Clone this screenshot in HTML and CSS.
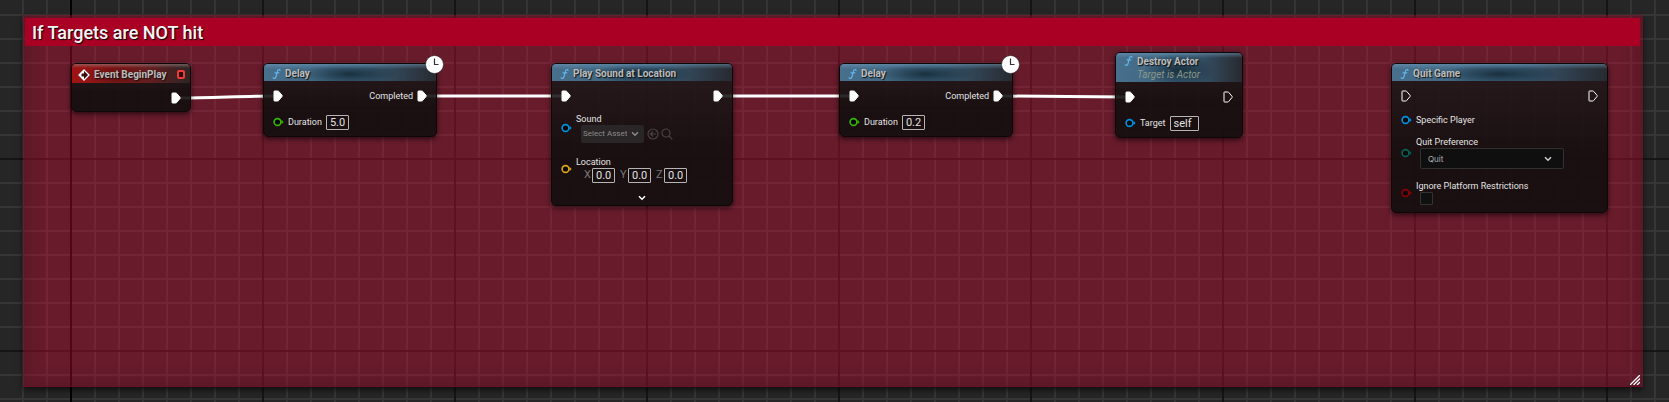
FILE: index.html
```html
<!DOCTYPE html>
<html lang="en">
<head>
<meta charset="utf-8">
<title>Event Graph</title>
<link rel="stylesheet" href="styles.css">
</head>
<body>
<svg class="defs" width="0" height="0" aria-hidden="true">
  <symbol id="exec" viewBox="0 0 10 12"><path d="M1.5 1h3.2q.6 0 1 .4L9 5.3q.5.6 0 1.2L5.7 10.5q-.4.5-1 .5H1.5q-.5 0-.5-.5v-9q0-.5.5-.5z" stroke="#fff" stroke-width="1"/></symbol>
  <symbol id="pin" viewBox="0 0 11 10"><circle cx="4.5" cy="5" r="3.4" fill="#080808" stroke="currentColor" stroke-width="1.6"/><path d="M8.5 2.8 10.6 5 8.5 7.2z" fill="currentColor"/></symbol>
  <symbol id="func" viewBox="0 0 10 12"><path d="M9 1.9Q8.6 1 7.5 1.2 6.2 1.4 5.7 3.6L4.6 8.5Q4.1 10.8 2.6 10.9 1.5 11 1.2 10.2M3.3 4.7H7.6" fill="none" stroke="#62b5ea" stroke-width="1.3" stroke-linecap="round"/></symbol>
  <symbol id="chev" viewBox="0 0 8 6"><path d="M1 1.3 4 4.3 7 1.3" fill="none" stroke="currentColor" stroke-width="1.5"/></symbol>
  <symbol id="clock" viewBox="0 0 19 19"><circle cx="9.5" cy="9.5" r="9" fill="#fff" stroke="#222" stroke-width=".6"/><path d="M9.5 3.5V9.5H13.5" fill="none" stroke="#333" stroke-width="1.2"/></symbol>
</svg>
<main class="graph">
  <section class="comment">
    <h1 class="comment-title">If Targets are NOT hit</h1>
    <svg class="grip" viewBox="0 0 10 10" aria-hidden="true"><path d="M0 10 10 0M3.5 10 10 3.5M7 10 10 7" stroke="#fff" stroke-width="1.3"/></svg>
  </section>
  <svg class="wires" aria-hidden="true">
    <path d="M180 98C210 98 245 96 275 96M425 96H563M722 96H851M1001 96C1040 96 1087 97 1127 97"/>
  </svg>

  <article class="node event">
    <header class="head red">
      <svg class="diamond" viewBox="0 0 12 12" aria-hidden="true"><path d="M6 1 11 6 6 11 1 6z" fill="#3a0c0c" stroke="#fff" stroke-width="1.3"/><path d="M1 6 6 1V4.5H3.5V7.5H6V11z" fill="#fff"/></svg>
      <h2>Event BeginPlay</h2>
      <span class="delegate"></span>
    </header>
    <div class="body"><div class="row end"><svg class="exec on"><use href="#exec"/></svg></div></div>
  </article>

  <article class="node delay first">
    <header class="head"><svg class="func"><use href="#func"/></svg><h2>Delay</h2></header>
    <svg class="clock"><use href="#clock"/></svg>
    <div class="body">
      <div class="row"><svg class="exec on"><use href="#exec"/></svg><span class="out">Completed</span><svg class="exec on"><use href="#exec"/></svg></div>
      <div class="row"><svg class="pin green"><use href="#pin"/></svg><label for="d1">Duration</label><input class="field" id="d1" value="5.0"></div>
    </div>
  </article>

  <article class="node sound">
    <header class="head"><svg class="func"><use href="#func"/></svg><h2>Play Sound at Location</h2></header>
    <div class="body">
      <div class="row ends"><svg class="exec on"><use href="#exec"/></svg><svg class="exec on"><use href="#exec"/></svg></div>
      <div class="row tall">
        <svg class="pin blue"><use href="#pin"/></svg>
        <div class="stack">
          <label for="asset">Sound</label>
          <div class="asset">
            <span class="pick dim"><select id="asset"><option>Select Asset</option></select><svg class="chev"><use href="#chev"/></svg></span>
            <button class="tool" aria-label="Use selected asset"><svg viewBox="0 0 12 12"><circle cx="6" cy="6" r="5"/><path d="M9 6H3.5M6 3.5 3.5 6 6 8.5"/></svg></button>
            <button class="tool" aria-label="Browse to asset"><svg viewBox="0 0 12 12"><circle cx="5" cy="5" r="4"/><path d="M8 8 11.3 11.3"/></svg></button>
          </div>
        </div>
      </div>
      <div class="row tall loc">
        <svg class="pin yellow"><use href="#pin"/></svg>
        <div class="stack">
          <span class="label">Location</span>
          <div class="vector">
            <label for="x">X</label><input class="field" id="x" value="0.0">
            <label for="y">Y</label><input class="field" id="y" value="0.0">
            <label for="z">Z</label><input class="field" id="z" value="0.0">
          </div>
        </div>
      </div>
      <button class="more" aria-label="Show more"><svg class="chev"><use href="#chev"/></svg></button>
    </div>
  </article>

  <article class="node delay second">
    <header class="head"><svg class="func"><use href="#func"/></svg><h2>Delay</h2></header>
    <svg class="clock"><use href="#clock"/></svg>
    <div class="body">
      <div class="row"><svg class="exec on"><use href="#exec"/></svg><span class="out">Completed</span><svg class="exec on"><use href="#exec"/></svg></div>
      <div class="row"><svg class="pin green"><use href="#pin"/></svg><label for="d2">Duration</label><input class="field" id="d2" value="0.2"></div>
    </div>
  </article>

  <article class="node destroy">
    <header class="head double"><svg class="func"><use href="#func"/></svg><div><h2>Destroy Actor</h2><p class="sub">Target is Actor</p></div></header>
    <div class="body">
      <div class="row ends"><svg class="exec on"><use href="#exec"/></svg><svg class="exec"><use href="#exec"/></svg></div>
      <div class="row"><svg class="pin blue"><use href="#pin"/></svg><label for="target">Target</label><input class="field wide" id="target" value="self"></div>
    </div>
  </article>

  <article class="node quit">
    <header class="head"><svg class="func"><use href="#func"/></svg><h2>Quit Game</h2></header>
    <div class="body">
      <div class="row ends"><svg class="exec"><use href="#exec"/></svg><svg class="exec"><use href="#exec"/></svg></div>
      <div class="row player"><svg class="pin blue"><use href="#pin"/></svg><span class="label">Specific Player</span></div>
      <div class="row tall pref">
        <svg class="pin teal"><use href="#pin"/></svg>
        <div class="stack">
          <label for="pref">Quit Preference</label>
          <span class="pick"><select id="pref"><option>Quit</option></select><svg class="chev"><use href="#chev"/></svg></span>
        </div>
      </div>
      <div class="row tall loc">
        <svg class="pin dred"><use href="#pin"/></svg>
        <div class="stack"><label for="ignore">Ignore Platform Restrictions</label><input class="check" type="checkbox" id="ignore"></div>
      </div>
    </div>
  </article>
</main>
</body>
</html>
```
FILE: styles.css
```css
* { box-sizing: border-box; }
body { margin: 0; font: 9px/12px Roboto, sans-serif; color: #e4e4e4; background: #262626; }
h1, h2, p { margin: 0; }
svg { display: block; flex: none; }
.defs { position: absolute; }
.graph {
  position: relative; display: flex; min-height: 100vh; padding: 15px 26px 15px 23px; overflow: hidden;
  background:
    linear-gradient(#000, #000) 70px 0 / 2px 100% no-repeat,
    linear-gradient(90deg, #151515 2px, transparent 2px) 70px 0 / 192px 192px,
    linear-gradient(#151515 2px, transparent 2px) 0 158px / 192px 192px,
    linear-gradient(90deg, #363636 2px, transparent 2px) 22px 0 / 24px 24px,
    linear-gradient(#363636 2px, transparent 2px) 0 14px / 24px 24px,
    #262626;
}
.comment {
  position: relative; flex: 1; padding: 3px 3px 3px 2px;
  background: rgba(203, 13, 53, .4);
  border-bottom: 1px solid #6b0f25;
  box-shadow: 0 3px 6px rgba(0, 0, 0, .6), inset 0 0 18px rgba(60, 20, 30, .5);
}
.comment-title {
  padding: 3px 7px 1px; font-size: 18px; line-height: 24px; font-weight: 500; color: #f4f4f4;
  background: #a90023; text-shadow: 1px 1px 1px #000;
}
.grip { position: absolute; right: 3px; bottom: 1px; width: 10px; height: 10px; }
.wires { position: absolute; inset: 0; width: 100%; height: 100%; fill: none; stroke: #fff; stroke-width: 3; }

.node {
  position: absolute; top: 63px; border: 1px solid #0c0809; border-radius: 5px;
  background: linear-gradient(rgba(30, 26, 27, .87), rgba(18, 14, 14, .91) 60%);
  box-shadow: 0 2px 5px rgba(0, 0, 0, .6);
}
.event { left: 71px; width: 120px; }
.delay { width: 174px; }
.first { left: 263px; }
.sound { left: 551px; width: 182px; }
.second { left: 839px; }
.destroy { left: 1115px; top: 52px; width: 128px; }
.quit { left: 1391px; width: 217px; }

.head {
  display: flex; align-items: center; gap: 4px; height: 17px; padding: 2px 8px 0; border-radius: 4px 4px 0 0;
  background:
    linear-gradient(rgba(120, 160, 190, .5), transparent 5px),
    radial-gradient(ellipse 28% 60% at 50% 60%, rgba(20, 40, 52, .85), transparent),
    linear-gradient(90deg, #48708d, #3a5f7a 55%, #282a30);
}
.head h2 { font-size: 10px; line-height: 14px; font-weight: 700; color: #bcbcbc; white-space: nowrap; text-shadow: 1px 1px 1px #111; }
.double { height: 29px; align-items: flex-start; padding-top: 2px; }
.sub { font-size: 10px; font-style: italic; color: #8b9889; white-space: nowrap; }
.red {
  height: 19px; padding: 2px 5px 0 6px;
  background:
    linear-gradient(rgba(150, 130, 130, .6), transparent 4px),
    radial-gradient(ellipse 30% 60% at 40% 60%, rgba(60, 10, 10, .6), transparent),
    linear-gradient(90deg, #a01313, #7c1b1b 50%, #2d2425);
}
.diamond { width: 12px; height: 12px; }
.delegate { width: 8px; height: 9px; margin-left: auto; border: 2px solid #f03a36; border-radius: 2px; background: #2a0808; }
.func { width: 9px; height: 12px; }
.clock { position: absolute; top: -9px; right: -8px; width: 19px; height: 19px; }

.body { display: flex; flex-direction: column; gap: 6px; padding: 5px 9px 4px; }
.event .body { padding-bottom: 3px; }
.row { display: flex; align-items: center; gap: 4px; height: 20px; white-space: nowrap; }
.end { justify-content: flex-end; }
.ends { justify-content: space-between; }
.out { margin-left: auto; }
.exec { width: 10px; height: 12px; fill: none; }
.on { fill: #fff; }
.pin { width: 11px; height: 10px; }
.green { color: #35b800; }
.blue { color: #0092de; }
.yellow { color: #dda714; }
.teal { color: #046355; }
.dred { color: #8f0000; }
.field {
  width: 23px; height: 15px; margin: 0; padding: 0 3px; border: 1px solid #b5b5b5; border-radius: 1px;
  background: transparent; color: #e2e2e2; font: 11px/13px Roboto, sans-serif;
}
.wide { width: 29px; }
.tall { height: 30px; }
.sound .tall { margin-top: 1px; }
.sound .loc { margin-top: 5px; }
.sound .body { padding-bottom: 0; }
.stack { display: flex; flex-direction: column; align-items: flex-start; }
.asset { display: flex; align-items: center; gap: 2px; padding-left: 5px; }
.pick { position: relative; display: flex; width: 144px; height: 21px; margin-left: 4px; }
.pick select {
  appearance: none; width: 100%; padding: 0 7px; border: 1px solid #303030; border-radius: 2px;
  background: #0f0f0f; color: #b0b0b0; font: 8px/12px Inter, sans-serif;
}
.chev { width: 8px; height: 6px; color: #d0d0d0; }
.pick .chev { position: absolute; right: 12px; top: 8px; }
.dim { width: 63px; height: 18px; margin: 0; }
.dim select { padding: 0 2px; border: 0; background: #2a2526; color: #8c8c8c; font-family: Roboto, sans-serif; }
.dim .chev { right: 5px; top: 6px; color: #8c8c8c; }
.tool { padding: 0; border: 0; background: none; }
.tool:first-of-type { margin-left: 1px; }
.tool svg { width: 12px; height: 12px; fill: none; stroke: #484244; stroke-width: 1.2; }
.vector { display: flex; align-items: center; padding-left: 8px; }
.vector label { width: 8px; color: #777; font-size: 11px; }
.vector .field { margin-right: 5px; }
.more { display: flex; justify-content: center; padding: 5px 0 4px; border: 0; background: none; }
.more .chev { color: #fff; }
.player { margin-top: -2px; }
.pref { height: 33px; }
.quit .loc { height: 25px; margin-top: 5px; }
.quit .body { padding-bottom: 7px; }
.check { appearance: none; width: 13px; height: 13px; margin: 0 0 0 4px; border: 1px solid #333; border-radius: 1px; background: #101010; }
```
